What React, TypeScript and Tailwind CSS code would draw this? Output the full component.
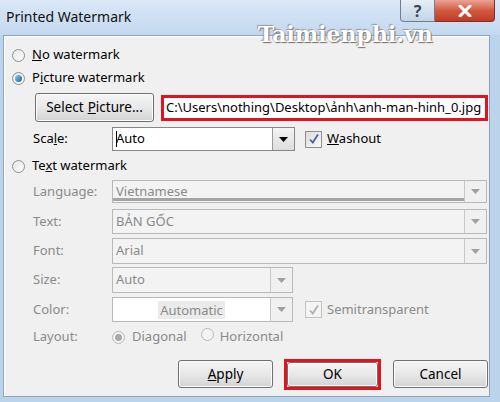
const ui = { fontFamily: '"Noto Sans", "Open Sans", sans-serif' };

function Radio({ checked = false, disabled = false }: { checked?: boolean; disabled?: boolean }) {
  return (
    <span
      className={`relative inline-flex w-[13px] h-[13px] rounded-full border items-center justify-center shrink-0 ${
        disabled ? "border-[#b8b8b8] bg-[#f4f4f4]" : "border-[#8e8f8f] bg-gradient-to-br from-[#e6e6e6] to-[#fdfdfd]"
      }`}
    >
      {checked && (
        <span
          className={`w-[7px] h-[7px] rounded-full ${
            disabled ? "bg-[#a8a8a8]" : "bg-gradient-to-br from-[#8fd0f5] to-[#1b5fa8]"
          }`}
        />
      )}
    </span>
  );
}

function Check({ disabled = false }: { disabled?: boolean }) {
  return (
    <span
      className={`inline-flex w-[17px] h-[17px] border items-center justify-center shrink-0 ${
        disabled ? "border-[#c2c2c2] bg-[#f4f4f4]" : "border-[#8e8f8f] bg-gradient-to-br from-[#dcdcdc] to-[#fafafa]"
      }`}
    >
      <svg width="12" height="12" viewBox="0 0 12 12">
        <path
          d="M2 6.5 L4.8 9.5 L10 1.5"
          fill="none"
          stroke={disabled ? "#b0b0b0" : "#4a64a8"}
          strokeWidth="1.8"
        />
      </svg>
    </span>
  );
}

function DropButton({ disabled = false }: { disabled?: boolean }) {
  return (
    <span
      className={`flex w-[22px] self-stretch items-center justify-center border-l ${
        disabled ? "border-[#c8c8c8] bg-[#f0f0f0]" : "border-[#9a9a9a] bg-gradient-to-b from-[#f4f4f4] to-[#dedede]"
      }`}
    >
      <svg width="9" height="5" viewBox="0 0 9 5">
        <path d="M0 0 H9 L4.5 5 Z" fill={disabled ? "#a0a0a0" : "#000"} />
      </svg>
    </span>
  );
}

function Combo({
  value,
  width,
  disabled = true,
  white = false,
  center = false,
  underline = false,
}: {
  value: string;
  width: string;
  disabled?: boolean;
  white?: boolean;
  center?: boolean;
  underline?: boolean;
}) {
  return (
    <div
      className={`relative flex h-full ${width} border ${
        disabled ? "border-[#b9b9b9]" : "border-[#828790]"
      } ${white ? "bg-white" : "bg-[#f3f3f3]"}`}
    >
      <div
        className={`flex-1 flex items-center text-[13px] ${center ? "justify-center" : "pl-[3px]"} ${
          disabled ? "text-[#8a8a8a]" : "text-black"
        }`}
      >
        {center ? <span className="bg-[#ebebeb] px-[2px] leading-[18px]">{value}</span> : value}
      </div>
      {underline && <div className="absolute left-0 right-[22px] bottom-[1px] h-[3px] bg-[#a5a5a5]" />}
      <DropButton disabled={disabled} />
    </div>
  );
}

function Btn({ children }: { children: React.ReactNode }) {
  return (
    <div className="flex h-full w-full items-center justify-center rounded-[3px] border border-[#707070] bg-gradient-to-b from-[#f5f5f5] via-[#e8e8e8] to-[#d3d3d3] text-[13.5px] text-black shadow-[inset_0_0_0_1px_#fcfcfc]">
      {children}
    </div>
  );
}

function Label({ children, disabled = false }: { children: React.ReactNode; disabled?: boolean }) {
  return (
    <span className={`w-[79px] shrink-0 text-[13px] ${disabled ? "text-[#8a8a8a]" : "text-black"}`}>{children}</span>
  );
}

export default function App() {
  return (
    <div className="w-[500px] h-[402px] bg-[#bcd3ec] flex flex-col overflow-hidden select-none" style={ui}>
      {/* Title bar */}
      <div className="relative h-[35px] shrink-0 flex bg-gradient-to-b from-[#dbe8f7] to-[#c3d8ef]">
        <span className="pl-[6px] pt-[6px] text-[14px] text-[#111]">Printed Watermark</span>
        <div className="ml-auto mr-[5px] flex h-[22px]">
          <div className="w-[35px] flex items-center justify-center rounded-bl-[4px] border border-t-0 border-[#6f7f92] bg-gradient-to-b from-[#e6eef7] to-[#c3d3e6] text-[16px] font-bold text-[#3a4452]">
            ?
          </div>
          <div className="w-[60px] flex items-center justify-center rounded-br-[4px] border border-l-0 border-t-0 border-[#7d3026] bg-gradient-to-b from-[#e9a394] via-[#d2593f] to-[#c23a24]">
            <svg width="14" height="12" viewBox="0 0 14 12">
              <path d="M2 1 L12 11 M12 1 L2 11" stroke="#fff" strokeWidth="3" strokeLinecap="round" />
            </svg>
          </div>
        </div>
        <span
          className="absolute left-[258px] top-[20px] text-[22px] leading-[28px] font-bold text-white [text-shadow:1px_1px_1px_#6d6d6d,-1px_-1px_1px_#9a9a9a]"
          style={{ fontFamily: '"DejaVu Serif", serif' }}
        >
          Taimienphi.vn
        </span>
      </div>

      {/* Client area */}
      <div className="ml-[3px] mr-[10px] h-[362px] flex flex-col border border-[#8da4c0] bg-[#f0f0f0] shadow-[inset_1px_1px_0_#ffffff]">
        <div className="mt-[8px] h-[22px] flex items-center gap-[7px] pl-[8px] text-[13px] text-black">
          <Radio />
          <span><u>N</u>o watermark</span>
        </div>
        <div className="mt-[1px] h-[22px] flex items-center gap-[7px] pl-[8px] text-[13px] text-black">
          <Radio checked />
          <span>P<u>i</u>cture watermark</span>
        </div>
        <div className="mt-[4px] h-[29px] flex items-center pl-[31px]">
          <div className="w-[119px] h-full">
            <Btn>
              Select <u className="ml-[4px]">P</u>icture...
            </Btn>
          </div>
          <div className="ml-[7px] w-[327px] h-[26px] border-[3px] border-[#e0141e] bg-white flex items-center pl-[2px] text-[13px] text-black whitespace-nowrap overflow-hidden">
            C:\Users\nothing\Desktop\ảnh\anh-man-hinh_0.jpg
          </div>
        </div>
        <div className="mt-[5px] h-[24px] flex items-center pl-[29px]">
          <Label>
            Sca<u>l</u>e:
          </Label>
          <div className="h-full relative">
            <Combo value="Auto" width="w-[183px]" disabled={false} white />
            <span className="absolute left-[4px] top-[4px] w-[1px] h-[16px] bg-black" />
          </div>
          <div className="ml-[10px] flex items-center gap-[5px] text-[13px] text-black">
            <Check />
            <span>
              <u>W</u>ashout
            </span>
          </div>
        </div>
        <div className="mt-[4px] h-[22px] flex items-center gap-[7px] pl-[8px] text-[13px] text-black">
          <Radio />
          <span>Te<u>x</u>t watermark</span>
        </div>
        <div className="mt-[3px] h-[23px] flex items-center pl-[29px]">
          <Label disabled>Language:</Label>
          <Combo value="Vietnamese" width="w-[375px]" underline />
        </div>
        <div className="mt-[6px] h-[25px] flex items-center pl-[29px]">
          <Label disabled>Text:</Label>
          <Combo value="BẢN GỐC" width="w-[375px]" />
        </div>
        <div className="mt-[4px] h-[26px] flex items-center pl-[29px]">
          <Label disabled>Font:</Label>
          <Combo value="Arial" width="w-[375px]" />
        </div>
        <div className="mt-[3px] h-[26px] flex items-center pl-[29px]">
          <Label disabled>Size:</Label>
          <Combo value="Auto" width="w-[181px]" />
        </div>
        <div className="mt-[4px] h-[25px] flex items-center pl-[29px]">
          <Label disabled>Color:</Label>
          <Combo value="Automatic" width="w-[181px]" white center />
          <div className="ml-[12px] flex items-center gap-[5px] text-[13px] text-[#8a8a8a]">
            <Check disabled />
            <span>Semitransparent</span>
          </div>
        </div>
        <div className="mt-[4px] h-[22px] flex items-center pl-[29px] text-[13px] text-[#8a8a8a]">
          <Label disabled>Layout:</Label>
          <Radio checked disabled />
          <span className="ml-[7px]">Diagonal</span>
          <span className="ml-[14px]">
            <Radio disabled />
          </span>
          <span className="ml-[6px]">Horizontal</span>
        </div>
        <div className="mt-[12px] h-[28px] flex items-center pl-[174px]">
          <div className="w-[95px] h-full">
            <Btn>
              <u>A</u>pply
            </Btn>
          </div>
          <div className="ml-[11px] w-[97px] h-[31px] border-[3px] border-[#e0141e]">
            <Btn>OK</Btn>
          </div>
          <div className="ml-[12px] w-[95px] h-full">
            <Btn>Cancel</Btn>
          </div>
        </div>
      </div>
    </div>
  );
}
